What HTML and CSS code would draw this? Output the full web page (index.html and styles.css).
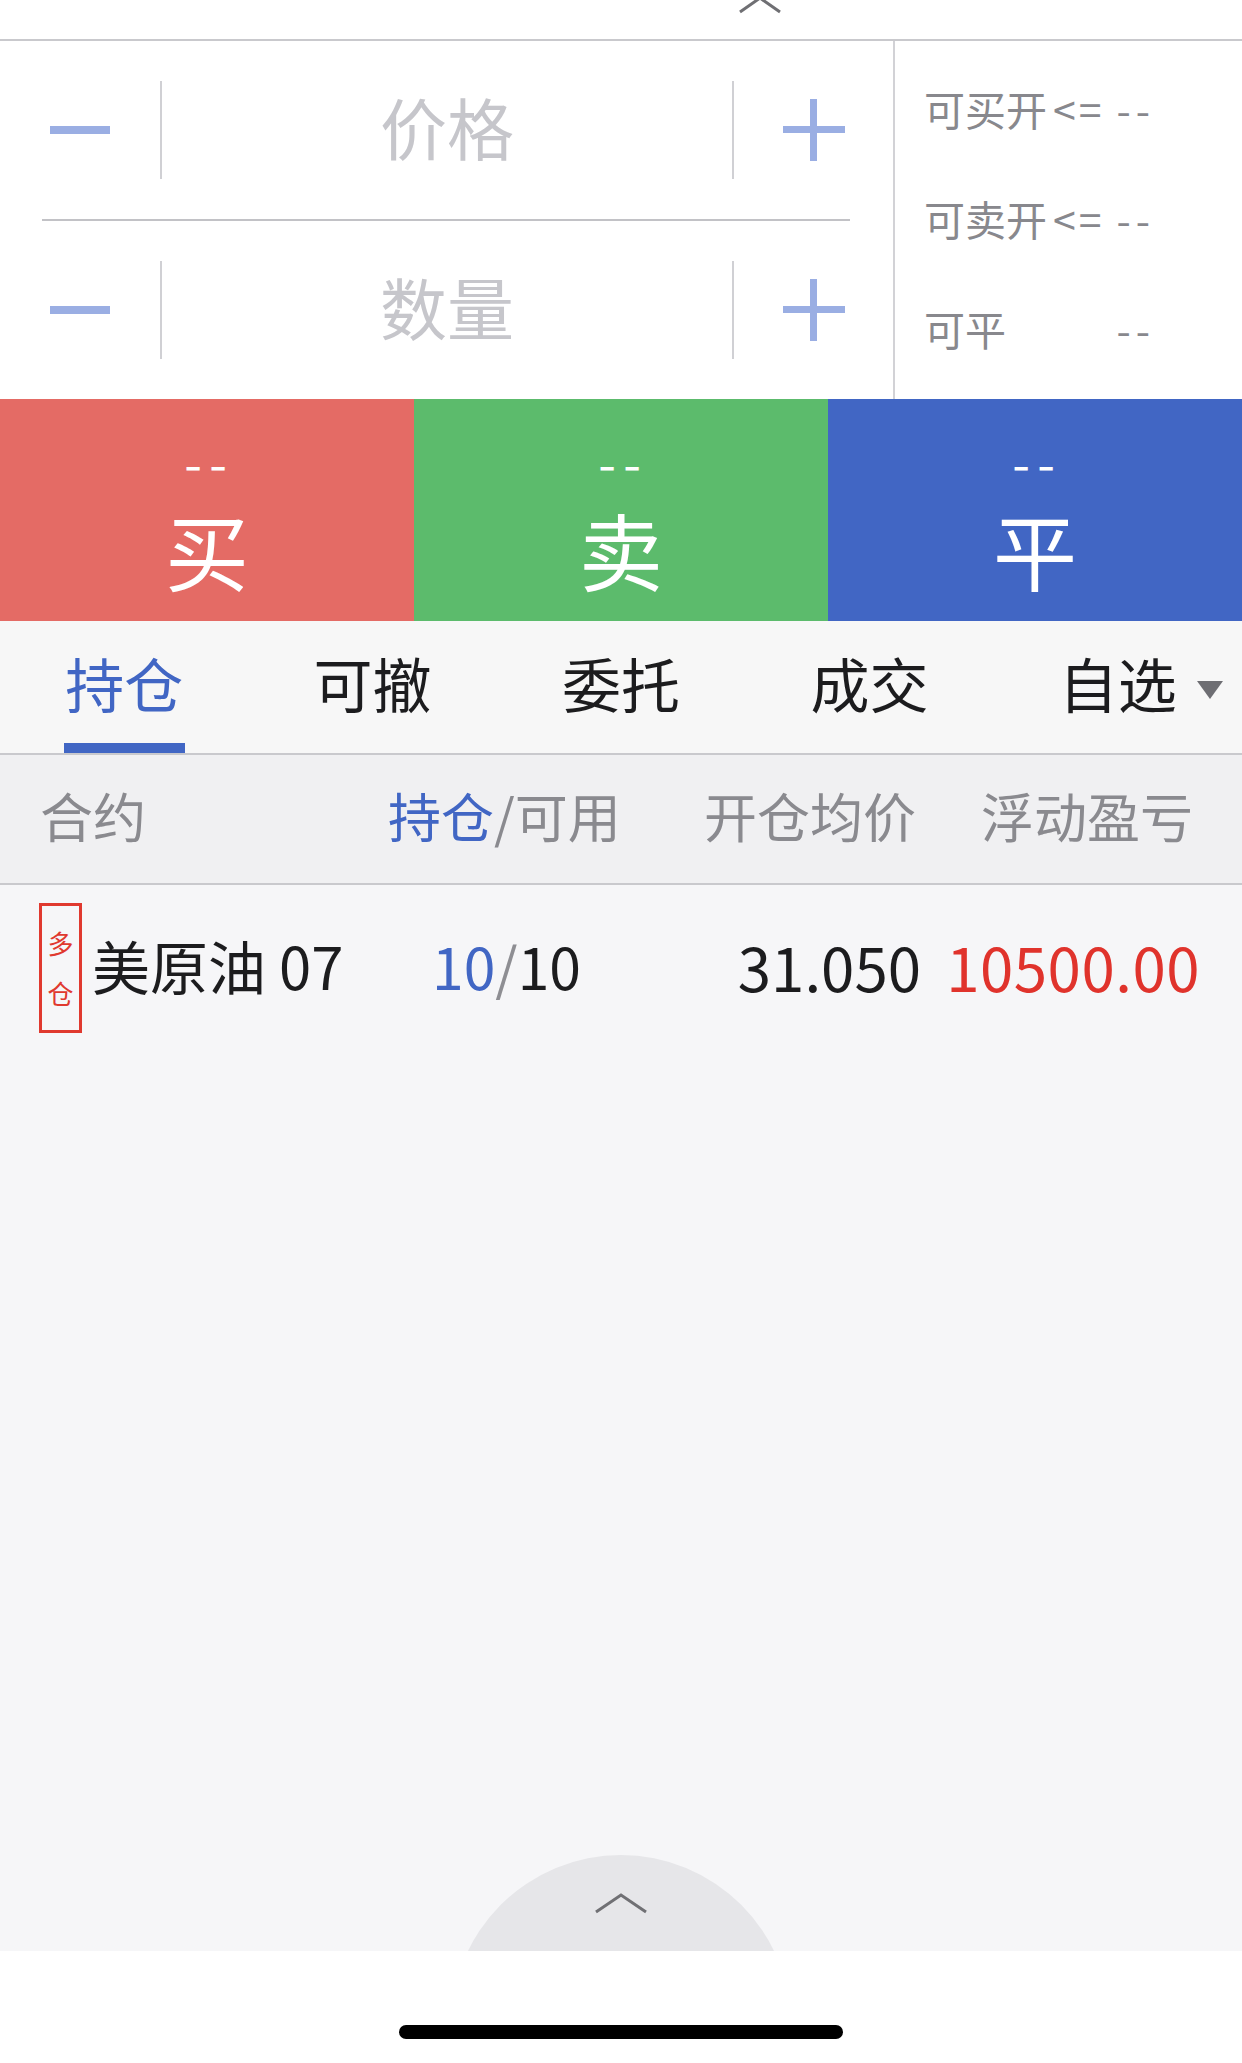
FILE: index.html
```html
<!DOCTYPE html>
<html lang="zh-CN">
<head>
    <meta charset="UTF-8">
    <meta name="viewport" content="width=device-width, initial-scale=1.0">
    <title>交易</title>
    <link rel="stylesheet" href="styles.css">
</head>
<body>
    <!-- top handle -->
    <div class="topbar">
        <svg class="top-chevron" width="44" height="14" viewBox="0 0 44 14">
            <polyline points="2,12 22,-2 42,12" fill="none" stroke="#6f6f73" stroke-width="3"/>
        </svg>
    </div>

    <!-- price / quantity inputs + available amounts -->
    <div class="trade">
        <div class="inputs">
            <div class="input-row">
                <div class="step">
                    <span class="minus"></span>
                </div>
                <span class="vline"></span>
                <div class="field">价格</div>
                <span class="vline"></span>
                <div class="step step-plus">
                    <svg width="62" height="62" viewBox="0 0 62 62">
                        <rect x="27" y="0" width="7" height="62" fill="#9aaee3"/>
                        <rect x="0" y="27" width="62" height="7" fill="#9aaee3"/>
                    </svg>
                </div>
            </div>
            <div class="hline"></div>
            <div class="input-row">
                <div class="step">
                    <span class="minus"></span>
                </div>
                <span class="vline"></span>
                <div class="field">数量</div>
                <span class="vline"></span>
                <div class="step step-plus">
                    <svg width="62" height="62" viewBox="0 0 62 62">
                        <rect x="27" y="0" width="7" height="62" fill="#9aaee3"/>
                        <rect x="0" y="27" width="62" height="7" fill="#9aaee3"/>
                    </svg>
                </div>
            </div>
        </div>
        <div class="avail">
            <div class="avail-row"><span>可买开<span class="op">&lt;=</span></span><span class="dash">--</span></div>
            <div class="avail-row"><span>可卖开<span class="op">&lt;=</span></span><span class="dash">--</span></div>
            <div class="avail-row"><span>可平</span><span class="dash">--</span></div>
        </div>
    </div>

    <!-- action buttons -->
    <div class="actions">
        <div class="action buy"><span class="action-price">--</span><span class="action-name">买</span></div>
        <div class="action sell"><span class="action-price">--</span><span class="action-name">卖</span></div>
        <div class="action close"><span class="action-price">--</span><span class="action-name">平</span></div>
    </div>

    <!-- tabs -->
    <div class="tabs">
        <div class="tab active"><span class="tab-label">持仓</span><span class="tab-bar"></span></div>
        <div class="tab"><span class="tab-label">可撤</span><span class="tab-bar"></span></div>
        <div class="tab"><span class="tab-label">委托</span><span class="tab-bar"></span></div>
        <div class="tab"><span class="tab-label">成交</span><span class="tab-bar"></span></div>
        <div class="tab"><span class="tab-label">自选<i class="caret"></i></span><span class="tab-bar"></span></div>
    </div>

    <!-- position table -->
    <div class="table-head">
        <span class="col-name">合约</span>
        <span><em class="blue">持仓</em>/可用</span>
        <span>开仓均价</span>
        <span>浮动盈亏</span>
    </div>

    <div class="list">
        <div class="pos-row">
            <div class="pos-name">
                <span class="badge">多<br>仓</span>
                <span class="contract">美原油 07</span>
            </div>
            <div class="pos-qty"><span class="blue">10</span><span class="slash">/</span>10</div>
            <div class="pos-price">31.050</div>
            <div class="pos-pnl">10500.00</div>
        </div>

        <div class="pull-up">
            <div class="pull-circle">
                <svg width="56" height="24" viewBox="0 0 56 24">
                    <polyline points="3,21 28,4 53,21" fill="none" stroke="#707074" stroke-width="3"/>
                </svg>
            </div>
        </div>
    </div>

    <div class="home-bar">
        <span class="home-indicator"></span>
    </div>
</body>
</html>
```

FILE: styles.css
```css
body {
    margin: 0;
    font-family: "Noto Sans CJK SC", "Noto Sans", sans-serif;
    background-color: #ffffff;
    color: #1c1c1e;
    width: 1242px;
    height: 2063px;
    display: flex;
    flex-direction: column;
    overflow: hidden;
}

em {
    font-style: normal;
}

.blue {
    color: #4166c4;
}

/* top handle */
.topbar {
    height: 39px;
    border-bottom: 2px solid #c9c9cd;
    padding-left: 738px;
    overflow: hidden;
}

.top-chevron {
    display: block;
}

/* trade inputs */
.trade {
    display: flex;
    height: 358px;
}

.inputs {
    width: 893px;
    border-right: 2px solid #d2d2d6;
    display: flex;
    flex-direction: column;
}

.input-row {
    height: 178px;
    display: flex;
    align-items: center;
}

.step {
    width: 160px;
    display: flex;
    justify-content: center;
    align-items: center;
}

.step-plus {
    width: 159px;
}

.step svg {
    display: block;
}

.minus {
    display: block;
    width: 60px;
    height: 8px;
    background-color: #9aaee3;
}

.vline {
    width: 2px;
    height: 98px;
    background-color: #d0d0d4;
}

.field {
    flex: 1;
    text-align: center;
    font-size: 67px;
    line-height: 80px;
    padding-bottom: 8px;
    color: #c6c6cb;
}

.hline {
    height: 2px;
    margin: 0 43px 0 42px;
    background-color: #c2c2c6;
}

.avail {
    flex: 1;
    padding: 12px 0 0 29px;
}

.avail-row {
    width: 226px;
    height: 110px;
    display: flex;
    align-items: center;
    justify-content: space-between;
    font-size: 41px;
    color: #88888d;
}

.op {
    margin-left: 6px;
    letter-spacing: 3px;
}

.dash {
    letter-spacing: 5px;
    margin-right: -5px;
}

/* action buttons */
.actions {
    display: flex;
    height: 222px;
}

.action {
    flex: 1;
    display: flex;
    flex-direction: column;
    align-items: center;
    padding-top: 44px;
    color: #ffffff;
    box-sizing: border-box;
}

.buy {
    background-color: #e46b65;
}

.sell {
    background-color: #5cbb6c;
}

.close {
    background-color: #4166c4;
}

.action-price {
    font-size: 33px;
    font-weight: 700;
    line-height: 42px;
    height: 42px;
    letter-spacing: 5px;
    margin-right: -5px;
    transform: scaleX(1.45);
}

.action-name {
    margin-top: 14px;
    font-size: 84px;
    line-height: 100px;
}

/* tabs */
.tabs {
    display: flex;
    background-color: #f7f7f7;
    border-bottom: 2px solid #c9c9cd;
}

.tab {
    flex: 1;
    display: flex;
    flex-direction: column;
    align-items: center;
    font-size: 59px;
    color: #1c1c1e;
}

.tab-label {
    height: 116px;
    padding-top: 6px;
    line-height: 112px;
}

.tab-bar {
    width: 121px;
    height: 10px;
}

.tab.active {
    color: #4166c4;
}

.tab.active .tab-bar {
    background-color: #4166c4;
}

.caret {
    display: inline-block;
    vertical-align: middle;
    margin: -4px -46px 0 20px;
    width: 0;
    height: 0;
    border-left: 13px solid transparent;
    border-right: 13px solid transparent;
    border-top: 18px solid #6e6e73;
}

/* table */
.table-head {
    height: 130px;
    box-sizing: border-box;
    padding-bottom: 8px;
    display: grid;
    grid-template-columns: 388px 316px 277px 1fr;
    align-items: center;
    background-color: #f0f0f2;
    border-bottom: 2px solid #c9c9cd;
    font-size: 53px;
    color: #8a8a8f;
}

.col-name {
    padding-left: 40px;
}

.list {
    flex: 1;
    background-color: #f6f6f8;
    display: flex;
    flex-direction: column;
}

.pos-row {
    display: grid;
    grid-template-columns: 432px 229px 260px 279px;
    padding: 18px 42px 18px 0;
    align-items: center;
    font-size: 58px;
}

.pos-name {
    display: flex;
    align-items: center;
    padding-left: 39px;
}

.badge {
    width: 37px;
    height: 124px;
    border: 3px solid #e0392f;
    color: #e0392f;
    font-size: 26px;
    line-height: 50px;
    text-align: center;
    display: flex;
    align-items: center;
    justify-content: center;
}

.contract {
    margin-left: 10px;
    padding-bottom: 6px;
    color: #1c1c1e;
}

.pos-qty,
.pos-price,
.pos-pnl {
    font-size: 60px;
    padding-bottom: 6px;
}

.pos-qty {
    font-size: 57px;
}

.slash {
    color: #8e8e93;
}

.pos-price,
.pos-pnl {
    text-align: right;
}

.pos-pnl {
    letter-spacing: 0.5px;
    color: #e0332c;
}

.pull-up {
    margin-top: auto;
    align-self: center;
    width: 340px;
    height: 96px;
    overflow: hidden;
}

.pull-circle {
    width: 340px;
    height: 340px;
    border-radius: 50%;
    background-color: #e6e6e9;
    display: flex;
    justify-content: center;
    padding-top: 36px;
    box-sizing: border-box;
}

.pull-circle svg {
    display: block;
}

/* home indicator */
.home-bar {
    height: 112px;
    background-color: #ffffff;
    display: flex;
    justify-content: center;
}

.home-indicator {
    margin-top: 74px;
    width: 444px;
    height: 14px;
    border-radius: 7px;
    background-color: #000000;
}
```
